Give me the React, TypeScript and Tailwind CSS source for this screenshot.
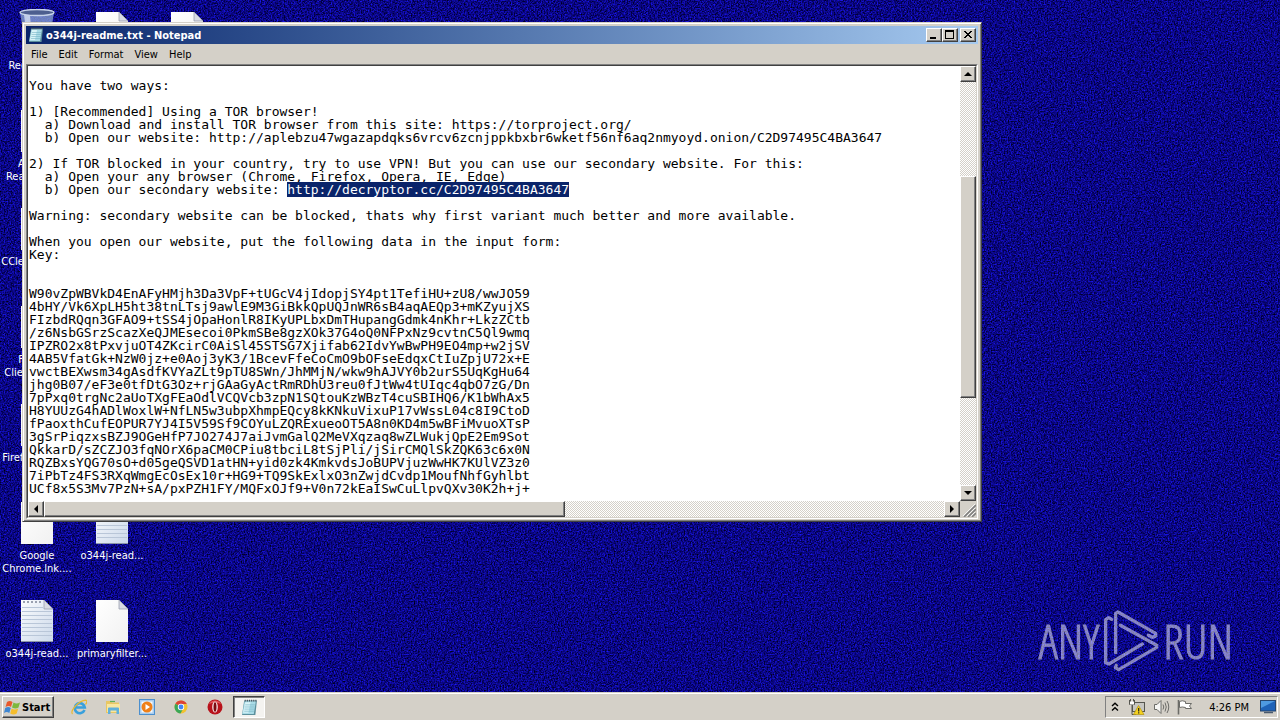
import { useEffect, useRef } from "react";
import type { ReactNode } from "react";

const SELECTED = "http://decryptor.cc/C2D97495C4BA3647";

const NOTE = `
You have two ways:

1) [Recommended] Using a TOR browser!
  a) Download and install TOR browser from this site: https://torproject.org/
  b) Open our website: http://aplebzu47wgazapdqks6vrcv6zcnjppkbxbr6wketf56nf6aq2nmyoyd.onion/C2D97495C4BA3647

2) If TOR blocked in your country, try to use VPN! But you can use our secondary website. For this:
  a) Open your any browser (Chrome, Firefox, Opera, IE, Edge)
  b) Open our secondary website: ${SELECTED}

Warning: secondary website can be blocked, thats why first variant much better and more available.

When you open our website, put the following data in the input form:
Key:


W90vZpWBVkD4EnAFyHMjh3Da3VpF+tUGcV4jIdopjSY4pt1TefiHU+zU8/wwJO59
4bHY/Vk6XpLH5ht38tnLTsj9awlE9M3GiBkkQpUQJnWR6sB4aqAEQp3+mKZyujXS
FIzbdRQqn3GFAO9+tSS4jOpaHonlR8IKyUPLbxDmTHupangGdmk4nKhr+LkzZCtb
/z6NsbGSrzScazXeQJMEsecoi0PkmSBe8gzXOk37G4oQ0NFPxNz9cvtnC5Ql9wmq
IPZRO2x8tPxvjuOT4ZKcirC0AiSl45STSG7Xjifab62IdvYwBwPH9EO4mp+w2jSV
4AB5VfatGk+NzW0jz+e0Aoj3yK3/1BcevFfeCoCmO9bOFseEdqxCtIuZpjU72x+E
vwctBEXwsm34gAsdfKVYaZLt9pTU8SWn/JhMMjN/wkw9hAJVY0b2urS5UqKgHu64
jhg0B07/eF3e0tfDtG3Oz+rjGAaGyActRmRDhU3reu0fJtWw4tUIqc4qbO7zG/Dn
7pPxq0trgNc2aUoTXgFEaOdlVCQVcb3zpN1SQtouKzWBzT4cuSBIHQ6/K1bWhAx5
H8YUUzG4hADlWoxlW+NfLN5w3ubpXhmpEQcy8kKNkuVixuP17vWssL04c8I9CtoD
fPaoxthCufEOPUR7YJ4I5V59Sf9COYuLZQRExueoOT5A8n0KD4m5wBFiMvuoXTsP
3gSrPiqzxsBZJ9OGeHfP7JO274J7aiJvmGalQ2MeVXqzaq8wZLWukjQpE2Em9Sot
QkkarD/sZCZJO3fqNOrX6paCM0CPiu8tbciL8tSjPli/jSirCMQlSkZQK63c6x0N
RQZBxsYQG70sO+d05geQSVD1atHN+yid0zk4KmkvdsJoBUPVjuzWwHK7KUlVZ3z0
7iPbTz4FS3RXqWmgEcOsEx10r+HG9+TQ9SkExlxO3nZwjdCvdp1MoufNhfGyhlbt
UCf8x5S3Mv7PzN+sA/pxPZH1FY/MQFxOJf9+V0n72kEaISwCuLlpvQXv30K2h+j+`;

const RAISED =
  "border border-t-white border-l-white border-r-[#404040] border-b-[#404040] bg-[#d4d0c8] shadow-[inset_-1px_-1px_0_#808080]";
const TRACK =
  "bg-[#eae8e4] bg-[repeating-conic-gradient(#d4d0c8_0_25%,#ffffff_0_50%)] bg-[length:2px_2px]";

function Wallpaper() {
  return (
    <svg className="absolute inset-0 h-full w-full" aria-hidden="true">
      <filter id="grain" x="0" y="0" width="100%" height="100%" colorInterpolationFilters="sRGB">
        <feTurbulence type="fractalNoise" baseFrequency="0.7" numOctaves="2" seed="4" />
        <feColorMatrix values="0.2 0 0 0 -0.06  0.2 0 0 0 -0.075  1.35 0 0 0 -0.16  0 0 0 0 1" />
      </filter>
      <rect width="100%" height="100%" filter="url(#grain)" />
    </svg>
  );
}

function PageIcon({ lined = false }: { lined?: boolean }) {
  return (
    <svg width="32" height="42" viewBox="0 0 32 42" aria-hidden="true">
      <defs>
        <linearGradient id="sheet" x1="0" y1="0" x2="1" y2="1">
          <stop offset="0" stopColor="#fff" />
          <stop offset="1" stopColor="#f1f1f1" />
        </linearGradient>
        <linearGradient id="ruled" x1="0" y1="0" x2="1" y2="1">
          <stop offset="0" stopColor="#fbfcfe" />
          <stop offset="1" stopColor="#ccd9ea" />
        </linearGradient>
      </defs>
      <path d="M0 0H23L32 9V42H0Z" fill={lined ? "url(#ruled)" : "url(#sheet)"} />
      <path d="M23 0V9H32Z" fill="#d9dbe3" stroke="#8f95a6" strokeWidth="0.7" />
      {lined && (
        <>
          <path
            d="M1 7.5H22M1 11.5H31M1 15.5H31M1 19.5H31M1 23.5H31M1 27.5H31M1 31.5H31M1 35.5H31"
            stroke="#b9c6d8"
          />
          <path d="M2 2H22" stroke="#9aa1b0" strokeWidth="2" strokeDasharray="2 2" />
          <path d="M0 41.5H32" stroke="#8c96a8" />
        </>
      )}
    </svg>
  );
}

function BinIcon() {
  return (
    <svg width="36" height="45" viewBox="0 0 36 45" aria-hidden="true">
      <path d="M1 3L7 43H29L35 3Z" fill="#8fa9d6" fillOpacity="0.75" />
      <path d="M5 6L10 42H14L11 6Z" fill="#e3ecfa" fillOpacity="0.7" />
      <ellipse cx="18" cy="3.5" rx="17" ry="3" fill="#4d5f8f" stroke="#c8d4ea" strokeWidth="1.4" />
    </svg>
  );
}

function DesktopIcon({ icon, lines }: { icon: ReactNode; lines: string[] }) {
  return (
    <li className="flex h-[98px] w-[74px] flex-col items-center last:h-auto">
      <div className="flex h-[42px] shrink-0 items-end">{icon}</div>
      <div className="mt-[5px] flex flex-col items-center text-[11px] leading-[13px] whitespace-nowrap text-white">
        {lines.map((l) => (
          <span key={l}>{l}</span>
        ))}
      </div>
    </li>
  );
}

function Spacer({ rows }: { rows: number }) {
  return (
    <>
      {Array.from({ length: rows }, (_, i) => (
        <li key={i} className="h-[98px] w-[74px]" aria-hidden="true" />
      ))}
    </>
  );
}

function NotepadIcon({ size }: { size: number }) {
  return (
    <svg width={size} height={size} viewBox="0 0 16 16" aria-hidden="true">
      <path d="M3 1.5H15L13.5 15H1Z" fill="#5c8f9c" />
      <path d="M3.4 2H14L12 14H1.2Z" fill="#a9dbe6" />
      <path d="M4 3H9L7 13H2Z" fill="#d9f3f7" />
      <path d="M4 5.5H13M3.6 7.5H12.8M3.3 9.5H12.5M3 11.5H12.2" stroke="#77b5c6" strokeWidth="0.6" />
      <path d="M3.5 1.5H14.5" stroke="#47525a" strokeWidth="1.8" strokeDasharray="1 1" />
    </svg>
  );
}

function CaptionButton({ label, children }: { label: string; children: ReactNode }) {
  return (
    <button type="button" aria-label={label} className={`flex h-[14px] w-4 items-center justify-center ${RAISED}`}>
      <svg width="12" height="10" viewBox="0 0 12 10" shapeRendering="crispEdges" aria-hidden="true">
        {children}
      </svg>
    </button>
  );
}

function ScrollButton({ label, d }: { label: string; d: string }) {
  return (
    <button type="button" aria-label={label} className={`flex h-4 w-4 shrink-0 items-center justify-center ${RAISED}`}>
      <svg width="12" height="12" viewBox="0 0 12 12" aria-hidden="true">
        <path d={d} fill="#000" />
      </svg>
    </button>
  );
}

function NotepadWindow() {
  const box = useRef<HTMLTextAreaElement>(null);

  useEffect(() => {
    const el = box.current;
    if (!el) return;
    const start = NOTE.indexOf(SELECTED);
    el.focus({ preventScroll: true });
    el.setSelectionRange(start, start + SELECTED.length);
    el.scrollTop = 0;
    el.scrollLeft = 0;
  }, []);

  return (
    <section
      aria-label="Notepad"
      className="absolute top-[22px] left-[22px] flex w-3/4 flex-col border border-t-[#d4d0c8] border-r-[#404040] border-b-[#404040] border-l-[#d4d0c8] bg-[#d4d0c8] px-[3px] pt-[3px] pb-[2px] shadow-[inset_1px_1px_0_#fff,inset_-1px_-1px_0_#808080]"
    >
      <header className="flex h-[18px] items-center gap-[2px] bg-linear-to-r from-[#0a246a] to-[#a6caf0] px-[2px]">
        <NotepadIcon size={16} />
        <h1 className="flex-1 pt-[2px] text-[11px] leading-4 font-bold text-white">o344j-readme.txt - Notepad</h1>
        <div className="flex">
          <CaptionButton label="Minimize">
            <rect x="2" y="7" width="6" height="2" />
          </CaptionButton>
          <CaptionButton label="Maximize">
            <path d="M1 0H10V9H1ZM2 2V8H9V2Z" fillRule="evenodd" />
          </CaptionButton>
          <div className="ml-[2px] flex">
            <CaptionButton label="Close">
              <path d="M2 1H4V2H5V3H7V2H8V1H10V2H9V3H8V4H7V5H8V6H9V7H10V8H8V7H7V6H5V7H4V8H2V7H3V6H4V5H5V4H4V3H3V2H2Z" />
            </CaptionButton>
          </div>
        </div>
      </header>
      <nav aria-label="Menu bar" className="flex h-5 items-center gap-px pt-[2px] text-[11px] leading-4 text-black">
        {["File", "Edit", "Format", "View", "Help"].map((m) => (
          <button key={m} type="button" className="px-[5px]">
            {m}
          </button>
        ))}
      </nav>
      <div className="border border-t-[#808080] border-r-white border-b-white border-l-[#808080]">
        <div className="grid grid-cols-[1fr_16px] grid-rows-[auto_16px] border border-t-[#404040] border-r-[#d4d0c8] border-b-[#d4d0c8] border-l-[#404040]">
          <textarea
            ref={box}
            aria-label="Document text"
            wrap="off"
            rows={33}
            spellCheck={false}
            defaultValue={NOTE}
            className="block w-full resize-none overflow-hidden bg-white px-px pb-[6px] font-['DejaVu_Sans_Mono',monospace] text-[13px] leading-[13px] whitespace-pre text-black caret-transparent outline-none selection:bg-[#0a246a] selection:text-white"
          />
          <div className={`flex flex-col ${TRACK}`}>
            <ScrollButton label="Scroll up" d="M6 4L10 8H2Z" />
            <div className="flex flex-1 flex-col">
              <div className="flex-[94]" />
              <div className={`flex-[221] ${RAISED}`} />
              <div className="flex-[87]" />
            </div>
            <ScrollButton label="Scroll down" d="M6 8L2 4H10Z" />
          </div>
          <div className={`flex ${TRACK}`}>
            <ScrollButton label="Scroll left" d="M4 6L8 2V10Z" />
            <div className="flex flex-1">
              <div className={`flex-[520] ${RAISED}`} />
              <div className="flex-[380]" />
            </div>
            <ScrollButton label="Scroll right" d="M8 6L4 10V2Z" />
          </div>
          <svg width="16" height="16" viewBox="0 0 16 16" className="bg-[#d4d0c8]" aria-hidden="true">
            <path d="M4 16L16 4M8 16L16 8M12 16L16 12" stroke="#808080" strokeWidth="1.6" />
            <path d="M3 15L15 3M7 15L15 7M11 15L15 11" stroke="#fff" strokeWidth="0.8" />
          </svg>
        </div>
      </div>
    </section>
  );
}

function Watermark() {
  return (
    <div className="absolute right-[47px] bottom-[19px] flex items-center gap-1 font-['Open_Sans_Condensed_Light','Noto_Sans_ExtraCondensed_Light','Noto_Sans_ExtraCondensed','Roboto_Condensed_Light','Roboto_Condensed','Liberation_Sans_Narrow',sans-serif] text-[48px] leading-[64px] font-normal text-white opacity-50 [-webkit-text-stroke:1px_#fff]">
      <span>ANY</span>
      <svg
        width="56"
        height="64"
        viewBox="268 57 168 192"
        fill="none"
        stroke="#fff"
        strokeWidth="10"
        strokeLinejoin="round"
        strokeLinecap="round"
        aria-hidden="true"
      >
        <path d="M294 88L285 83L276 89V218L286 222L386 162" />
        <path d="M306 188V70L313 66L426 130V138L416 142L404 136" />
        <path d="M320 106L429 166V172L315 239L305 233L308 226" />
      </svg>
      <span>RUN</span>
    </div>
  );
}

function StartFlag() {
  return (
    <svg width="17" height="17" viewBox="0 0 17 17" aria-hidden="true">
      <path d="M3 3C5 1.5 6.500 1.500 8.500 3L7 8C5.500 6.800 4 6.800 1.500 8Z" fill="#e8592b" />
      <path d="M9.500 3.500C11.500 4.800 13.500 4.800 16 3.500L14.500 8.500C12.500 9.800 10.500 9.800 8 8.500Z" fill="#7db83c" />
      <path d="M1.200 9C3.500 7.800 5 7.800 6.800 9L5.300 14C3.500 12.800 2 12.800 0 14Z" fill="#3f87d2" />
      <path d="M7.700 9.500C9.700 10.800 11.700 10.800 14.200 9.500L12.700 14.500C10.500 15.800 8.500 15.800 6.200 14.500Z" fill="#f5bd2b" />
    </svg>
  );
}

const QUICK: { name: string; art: ReactNode }[] = [
  {
    name: "Internet Explorer",
    art: (
      <>
        <path d="M13.500 11A5 5 0 1 1 13.800 8.500H5" fill="none" stroke="#39a0dc" strokeWidth="2.6" />
        <path d="M1.500 15C-1 12 7 2 15 1.200C16.500 2 15.800 4 14.500 5.500" fill="none" stroke="#e9b930" strokeWidth="1.2" />
      </>
    ),
  },
  {
    name: "Windows Explorer",
    art: (
      <>
        <path d="M1 2H6L7 3.500H14V14H1Z" fill="#e8c764" />
        <path d="M2 5H15V13H2Z" fill="#f8e6a0" />
        <path d="M3 15V9.500Q3 8.500 4 8.500H13Q14 8.500 14 9.500V15H11.500V11.500H5.500V15Z" fill="#5fb0dc" />
        <path d="M5 2.500H10" stroke="#5caf58" strokeWidth="1.2" />
      </>
    ),
  },
  {
    name: "Media Player",
    art: (
      <>
        <rect x="0.500" y="0.500" width="15" height="15" fill="#a9cdee" stroke="#4b8fce" />
        <rect x="2.500" y="2.500" width="11" height="11" fill="#f5fafd" />
        <circle cx="8" cy="8" r="5.500" fill="#ef8019" />
        <path d="M6.500 5L11 8L6.500 11Z" fill="#fff" />
      </>
    ),
  },
  {
    name: "Google Chrome",
    art: (
      <>
        <circle cx="8" cy="8" r="6.500" fill="#f2c230" />
        <path d="M8 8L2.400 4.700A6.500 6.500 0 0 1 13.800 5H8Z" fill="#dc4335" />
        <path d="M8 8L2.400 4.700A6.500 6.500 0 0 0 7.500 14.500L10 10Z" fill="#3aa757" />
        <circle cx="8" cy="8" r="3.200" fill="#fff" />
        <circle cx="8" cy="8" r="2.400" fill="#4285f4" />
      </>
    ),
  },
  {
    name: "Opera",
    art: (
      <>
        <circle cx="8" cy="8" r="7.500" fill="#b8121b" />
        <path d="M2 5A7 7 0 0 1 14 5Q8 2 2 5Z" fill="#e2575b" />
        <ellipse cx="8" cy="8" rx="2.800" ry="5.500" fill="#f7e9e9" />
        <ellipse cx="8" cy="8" rx="1.500" ry="4.800" fill="#7c0a10" />
      </>
    ),
  },
];

function Taskbar() {
  return (
    <footer className="relative flex h-7 items-center border-t border-[#d4d0c8] bg-[#d4d0c8] px-[2px] pt-px text-[11px] text-black shadow-[inset_0_1px_0_#fff]">
      <button type="button" className={`flex h-[22px] w-[52px] items-center gap-px pl-px font-bold ${RAISED}`}>
        <StartFlag />
        <span className="pt-[2px]">Start</span>
      </button>
      <div className="ml-[17px] flex items-center">
        {QUICK.map((q) => (
          <button key={q.name} type="button" aria-label={q.name} className="flex h-[22px] w-[34px] items-center">
            <svg width="16" height="16" viewBox="0 0 16 16" aria-hidden="true">
              {q.art}
            </svg>
          </button>
        ))}
      </div>
      <button
        type="button"
        aria-label="o344j-readme.txt - Notepad"
        className="-ml-2 flex h-[22px] w-8 items-center justify-center border border-t-[#404040] border-r-white border-b-white border-l-[#404040] bg-[#f4f3f0] shadow-[inset_1px_1px_0_#808080]"
      >
        <NotepadIcon size={17} />
      </button>
      <div className="ml-auto flex h-[22px] items-center border border-t-[#808080] border-r-white border-b-white border-l-[#808080] pl-[5px]">
        <svg width="8" height="10" viewBox="0 0 8 10" fill="none" stroke="#000" strokeWidth="1.400" aria-hidden="true">
          <path d="M1 4L4 1.200L7 4M1 8.500L4 5.700L7 8.500" />
        </svg>
        <svg width="17" height="17" viewBox="0 0 17 17" className="ml-[9px]" aria-label="Network">
          <rect x="4.500" y="3.500" width="12" height="9" fill="#c6c6c2" stroke="#55554f" />
          <path d="M1.500 1V5.500H6.500V1M2.500 0V3M5.500 0V3M4 5.500V15.500H8" fill="none" stroke="#55554f" />
          <rect x="2" y="2.500" width="4" height="3" fill="#fff" />
          <path d="M10.500 6.500L16 15.500H5.500Z" fill="#f5d21f" stroke="#b39310" strokeWidth="0.700" />
          <path d="M10.700 9V12.500M10.700 13.300V14.500" stroke="#222" strokeWidth="1.200" />
        </svg>
        <svg width="17" height="16" viewBox="0 0 17 16" className="ml-2" fill="none" stroke="#6c6c68" aria-label="Volume">
          <path d="M1.500 5.500H4L8 1.500V14.500L4 10.500H1.500Z" fill="#f6f6f4" />
          <path d="M10 5.500Q11.500 8 10 10.500M12 3.500Q14.500 8 12 12.500M14 2Q17.500 8 14 14" />
        </svg>
        <svg width="16" height="16" viewBox="0 0 16 16" className="ml-[7px]" aria-label="Action Center">
          <path d="M2.500 2.500Q5 1 8.500 2.500V4.500H14.500L12.500 7L14.500 9.500H8.500V8.500Q5 7.500 2.500 8.500Z" fill="#fff" stroke="#6c6c68" />
          <path d="M1.500 1V15.500" stroke="#6c6c68" strokeWidth="1.600" />
        </svg>
        <time className="ml-4 pt-[2px] whitespace-nowrap">4:26 PM</time>
        <svg width="17" height="14" viewBox="0 0 17 14" className="ml-[11px]" aria-label="Show desktop">
          <rect x="0.500" y="0.500" width="15" height="10.500" fill="#1e62b8" stroke="#26466e" />
          <path d="M1 1H15L1 8Z" fill="#4e9ae2" />
          <path d="M4 12.500H13" stroke="#4a5a6e" strokeWidth="1.500" />
        </svg>
      </div>
    </footer>
  );
}

export default function App() {
  return (
    <div className="flex min-h-screen flex-col overflow-hidden bg-[#0b0b78] font-['Tahoma','DejaVu_Sans_Condensed','DejaVu_Sans',sans-serif]">
      <main className="relative flex-1">
        <Wallpaper />
        <div className="relative flex gap-px pt-3">
          <ul>
            <DesktopIcon icon={<BinIcon />} lines={["Recycle Bin"]} />
            <DesktopIcon icon={<PageIcon />} lines={["Acrobat", "Reader DC..."]} />
            <DesktopIcon icon={<PageIcon />} lines={["CCleaner.lnk..."]} />
            <DesktopIcon icon={<PageIcon />} lines={["FileZilla", "Client.lnk......"]} />
            <DesktopIcon icon={<PageIcon />} lines={["Firefox.lnk......"]} />
            <DesktopIcon icon={<PageIcon />} lines={["Google", "Chrome.lnk...."]} />
            <DesktopIcon icon={<PageIcon lined />} lines={["o344j-read..."]} />
          </ul>
          <ul>
            <DesktopIcon icon={<PageIcon />} lines={[]} />
            <Spacer rows={4} />
            <DesktopIcon icon={<PageIcon lined />} lines={["o344j-read..."]} />
            <DesktopIcon icon={<PageIcon />} lines={["primaryfilter..."]} />
          </ul>
          <ul>
            <DesktopIcon icon={<PageIcon />} lines={[]} />
          </ul>
        </div>
        <Watermark />
        <NotepadWindow />
      </main>
      <Taskbar />
    </div>
  );
}
